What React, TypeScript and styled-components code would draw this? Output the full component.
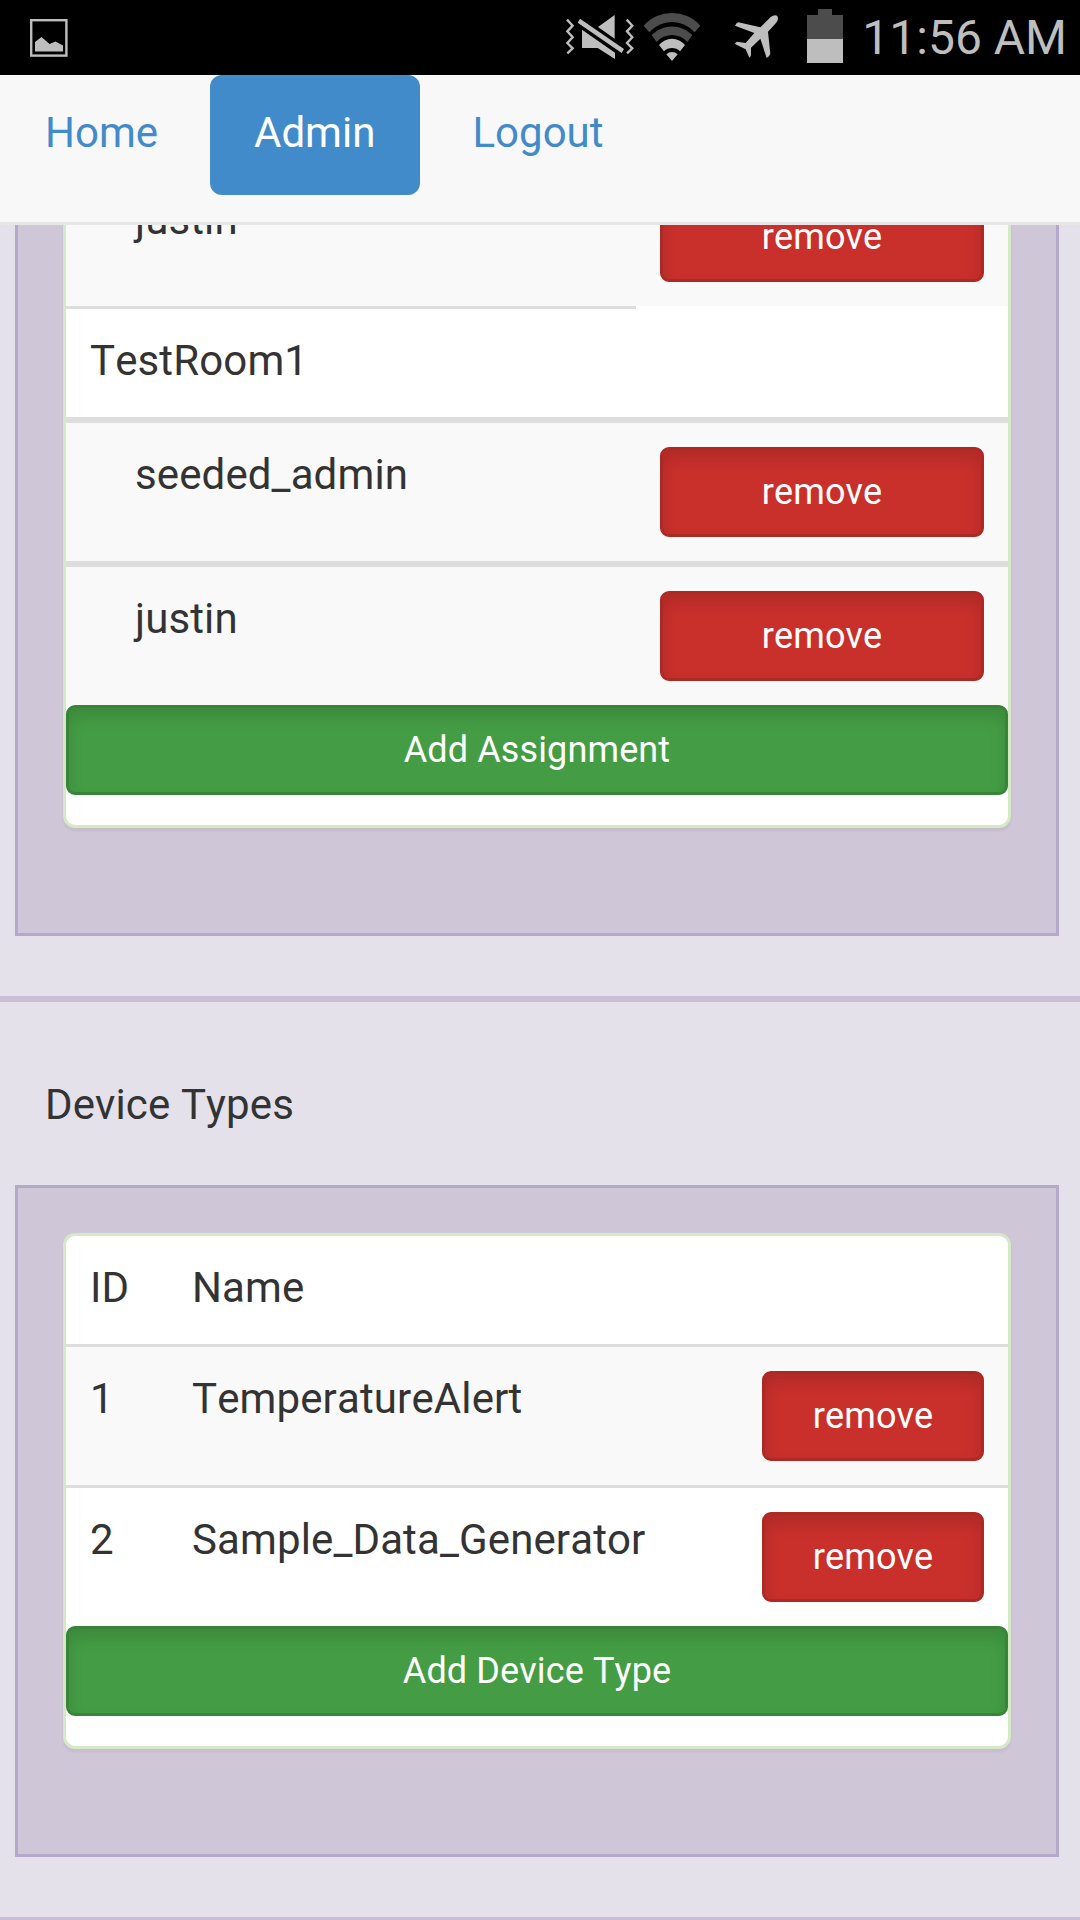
import React from "react";
import styled, { createGlobalStyle, css } from "styled-components";

const GlobalStyle = createGlobalStyle`
  *, *::before, *::after { box-sizing: border-box; }
  body {
    margin: 0;
    background: #e4e1eb;
    color: #333;
    font: 42px/60px Roboto, "Liberation Sans", sans-serif;
    font-kerning: none;
    letter-spacing: 0.12px;
  }
`;

const Screen = styled.div`
  display: flex;
  flex-direction: column;
  width: 1080px;
  height: 1920px;
  overflow: hidden;
`;

const StatusBar = styled.header`
  display: flex;
  align-items: center;
  flex: none;
  height: 75px;
  padding: 0 13px 0 30px;
  background: #000;
  color: #bebebe;
  svg { display: block; flex: none; }
`;

const StatusIcons = styled.div`
  display: flex;
  align-items: center;
  margin-left: auto;
`;

const IconSlot = styled.span<{ $gap: number }>`
  display: block;
  margin-right: ${(p) => p.$gap}px;
`;

const Clock = styled.time`
  width: 207px;
  font-size: 48px;
  letter-spacing: 0;
  line-height: 75px;
  text-align: right;
  white-space: nowrap;
`;

const Navbar = styled.nav`
  display: flex;
  align-items: flex-start;
  gap: 6px;
  flex: none;
  height: 150px;
  background: #f8f8f8;
  border-bottom: 3px solid #e7e7e7;
`;

const NavLink = styled.a<{ $active?: boolean; $width: number; $inset?: number }>`
  width: ${(p) => p.$width}px;
  height: 120px;
  padding: 30px 0 0 ${(p) => p.$inset ?? 45}px;
  border-radius: 12px;
  letter-spacing: 0;
  line-height: 56px;
  white-space: nowrap;
  color: ${(p) => (p.$active ? "#fff" : "#428bca")};
  background: ${(p) => (p.$active ? "#428bca" : "transparent")};
`;

const Viewport = styled.main`
  flex: 1;
  min-height: 0;
  overflow: hidden;
`;

const Scrolled = styled.div`
  margin-top: -108px;
`;

const Section = styled.section`
  padding: 0 21px 60px 15px;
  border-bottom: 6px solid #c8bfd6;
`;

const SectionTitle = styled.h2`
  margin: 0;
  padding: 75px 30px 52px;
  font-size: 42px;
  font-weight: 400;
  line-height: 56px;
`;

const Panel = styled.div`
  padding: 45px 45px 105px;
  background: #cfc6d7;
  border: 3px solid #b4a9c8;
`;

const Card = styled.div`
  padding-bottom: 30px;
  background: #fff;
  border: 3px solid #d6e9c6;
  border-radius: 12px;
  box-shadow: 0 3px 3px rgba(0, 0, 0, 0.05);
`;

const Row = styled.div<{ $columns: string; $striped?: boolean; $rule?: number }>`
  display: grid;
  grid-template-columns: ${(p) => p.$columns};
  background: ${(p) => (p.$striped ? "#f9f9f9" : "transparent")};
  ${(p) => p.$rule && css`border-top: ${p.$rule}px solid #ddd;`}
`;

const Cell = styled.div<{ $indent?: boolean; $ruled?: boolean }>`
  padding: 24px 24px 28px ${(p) => (p.$indent ? 69 : 24)}px;
  line-height: 56px;
  white-space: nowrap;
  ${(p) => p.$ruled && css`border-top: 3px solid #ddd;`}
`;

const ActionCell = styled.div`
  padding: 24px;
`;

const Button = styled.button<{ $kind: "danger" | "success" }>`
  display: block;
  width: 100%;
  height: 90px;
  padding: 0;
  border: 3px solid ${(p) => (p.$kind === "danger" ? "#ac2925" : "#398439")};
  border-radius: 9px;
  background: ${(p) => (p.$kind === "danger" ? "#c9302c" : "#449d44")};
  box-shadow: inset 0 9px 15px rgba(0, 0, 0, 0.125);
  color: #fff;
  font: 36px/54px Roboto, "Liberation Sans", sans-serif;
  font-kerning: none;
  letter-spacing: 0.12px;
`;

const ASSIGNMENT_COLUMNS = "570px 372px";
const DEVICE_COLUMNS = "102px 570px 270px";

const PictureIcon = () => (
  <svg width="38" height="75" viewBox="0 0 38 75">
    <rect x="1.2" y="20.2" width="35.2" height="35.4" fill="none" stroke="#bebebe" strokeWidth="2.4" />
    <path d="M5 51.5V42l6.5-5 8 7 6-2.5 7.5 4v6z" fill="#bebebe" />
  </svg>
);

const MutedVibrateIcon = () => (
  <svg width="70" height="75" viewBox="15 -15 210 225">
    <g fill="none" stroke="#bebebe" strokeWidth="7">
      <path d="M21 44 38 62 22 79 38 97 22 114 38 130 22 145" />
      <path d="M200 44 217 62 201 79 217 97 201 114 217 130 201 145" />
    </g>
    <path
      fill="#bebebe"
      d="M60 41 192 132 185 144 53 53zM164 30V101L114 66zM66 74 165 143V162L113 129H66z"
    />
  </svg>
);

const WifiIcon = () => (
  <svg width="58" height="75" viewBox="249 -15 174 225">
    <g fill="#4c4c4c">
      <path d="M251 62A114 114 0 0 1 421 62L404 82A90 90 0 0 0 268 82z" />
      <path d="M275 90A85 85 0 0 1 397 90L382 111A61 61 0 0 0 290 111z" />
    </g>
    <g fill="#bebebe">
      <path d="M297 120A50 50 0 0 1 375 120L360 139A34 34 0 0 0 312 139z" />
      <path d="M319 148A24 24 0 0 1 353 148L336 168z" />
    </g>
  </svg>
);

const PlaneIcon = () => (
  <svg width="45" height="75" viewBox="522 -15 135 225">
    <path
      fill="#bebebe"
      d="M632 36Q643 28 651 32Q656 37 652 48Q649 54 624 80L631 146Q629 154 620 159L601 101L573 128V151Q571 156 568 158L557 133L525 117Q527 111 531 110L557 114L583 84L525 62Q528 54 535 52L601 67z"
    />
  </svg>
);

const BatteryIcon = () => (
  <svg width="36" height="75" viewBox="741 -15 108 225">
    <path fill="#4c4c4c" d="M774 12h42v18h33v72H741V30h33z" />
    <path fill="#bebebe" d="M741 102h108v72H741z" />
  </svg>
);

const RemoveCell = () => (
  <ActionCell>
    <Button $kind="danger">remove</Button>
  </ActionCell>
);

const Assignment = ({ user, rule }: { user: string; rule?: number }) => (
  <Row $columns={ASSIGNMENT_COLUMNS} $striped $rule={rule}>
    <Cell $indent>{user}</Cell>
    <RemoveCell />
  </Row>
);

const deviceTypes = [
  { id: 1, name: "TemperatureAlert" },
  { id: 2, name: "Sample_Data_Generator" },
];

export default function App() {
  return (
    <Screen>
      <GlobalStyle />
      <StatusBar>
        <PictureIcon />
        <StatusIcons>
          <IconSlot $gap={8}><MutedVibrateIcon /></IconSlot>
          <IconSlot $gap={33}><WifiIcon /></IconSlot>
          <IconSlot $gap={28}><PlaneIcon /></IconSlot>
          <IconSlot $gap={17}><BatteryIcon /></IconSlot>
          <Clock>11:56 AM</Clock>
        </StatusIcons>
      </StatusBar>
      <Navbar>
        <NavLink $width={204}>Home</NavLink>
        <NavLink $width={210} $inset={44} $active>Admin</NavLink>
        <NavLink $width={222} $inset={46.5}>Logout</NavLink>
      </Navbar>
      <Viewport>
        <Scrolled>
          <Section>
            <Panel>
              <Card>
                <Assignment user="justin" />
                <Row $columns={ASSIGNMENT_COLUMNS}>
                  <Cell $ruled>TestRoom1</Cell>
                </Row>
                <Assignment user="seeded_admin" rule={6} />
                <Assignment user="justin" rule={6} />
                <Button $kind="success">Add Assignment</Button>
              </Card>
            </Panel>
          </Section>
          <Section>
            <SectionTitle>Device Types</SectionTitle>
            <Panel>
              <Card>
                <Row $columns={DEVICE_COLUMNS}>
                  <Cell>ID</Cell>
                  <Cell>Name</Cell>
                </Row>
                {deviceTypes.map((type) => (
                  <Row key={type.id} $columns={DEVICE_COLUMNS} $striped={type.id % 2 === 1} $rule={3}>
                    <Cell>{type.id}</Cell>
                    <Cell>{type.name}</Cell>
                    <RemoveCell />
                  </Row>
                ))}
                <Button $kind="success">Add Device Type</Button>
              </Card>
            </Panel>
          </Section>
        </Scrolled>
      </Viewport>
    </Screen>
  );
}
